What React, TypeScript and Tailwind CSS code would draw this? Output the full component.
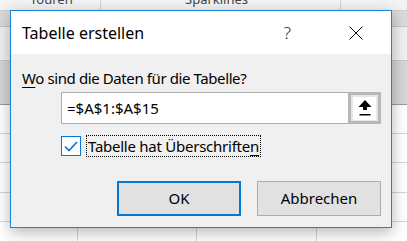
import React from "react";

function UploadArrow() {
  return (
    <svg width="14" height="17" viewBox="0 0 14 17" className="block">
      <path d="M7 0 L13.5 7 L9 7 L9 10 L5 10 L5 7 L0.5 7 Z" fill="#000" />
      <rect x="1.5" y="14" width="11" height="1.5" fill="#000" />
    </svg>
  );
}

function Sheet() {
  return (
    <div className="absolute inset-0 flex flex-col bg-white">
      <div className="relative h-[11px] bg-[#f3f3f3] border-b border-[#d0d0d0] text-[13px] leading-none text-[#444]">
        <span className="absolute left-[30px] top-[-7px]">Touren</span>
        <span className="absolute left-[185px] top-[-7px]">Sparklines</span>
        <div className="absolute left-[100px] top-0 h-full w-px bg-[#d4d4d4]" />
        <div className="absolute left-[340px] top-0 h-full w-px bg-[#d4d4d4]" />
      </div>
      <div className="h-[16px] bg-[#dadada] border-b border-[#c6c6c6]" />
      <div className="h-[34px] bg-[#f0f0f0] border-b border-[#c6c6c6]" />
      <div className="h-[44px] bg-[#d6d6d6] border-b border-[#9a9a9a]" />
      <div className="relative flex-1 bg-white">
        <div className="h-[29px] border-b border-[#d4d4d4]" />
        <div className="h-[29px] border-b border-[#d4d4d4]" />
        <div className="h-[30px] border-b border-[#d4d4d4]" />
        <div className="h-[29px] border-b border-[#d4d4d4]" />
        <div className="absolute left-[77px] top-0 h-full w-px bg-[#d4d4d4]" />
        <div className="absolute left-[196px] top-0 h-full w-px bg-[#d4d4d4]" />
        <div className="absolute left-[316px] top-0 h-full w-px bg-[#d4d4d4]" />
      </div>
    </div>
  );
}

export default function App() {
  return (
    <div
      className="relative w-[407px] h-[241px] overflow-hidden text-black"
      style={{ fontFamily: '"Noto Sans", "Open Sans", sans-serif' }}
    >
      <Sheet />
      <div className="absolute left-[10px] top-[10px] w-[382px] h-[218px] border border-[#1883d7] bg-[#f0f0f0] shadow-[0_4px_14px_rgba(0,0,0,0.3)] flex flex-col">
        <div className="h-[43px] bg-white flex items-center pl-[11px] text-[16px]">
          <span className="mt-[1px]">Tabelle erstellen</span>
          <span className="ml-auto mr-[58px] text-[17px] text-[#222] font-light">?</span>
          <svg width="14" height="14" viewBox="0 0 14 14" className="mr-[28px]">
            <path d="M0.5 0.5 L13.5 13.5 M13.5 0.5 L0.5 13.5" stroke="#111" strokeWidth="1" />
          </svg>
        </div>
        <div className="flex flex-col pl-[11px] pr-[10px] pt-[14px] text-[15px]">
          <div className="leading-[20px] tracking-[-0.4px]">
            <span className="underline underline-offset-[3px]">W</span>o sind die Daten für die Tabelle?
          </div>
          <div className="ml-[39px] mt-[4px] h-[32px] flex border border-[#adadad] bg-white">
            <div className="flex-1 flex items-center pl-[5px] text-[15px]">=$A$1:$A$15</div>
            <div className="w-[33px] border-[3px] border-[#b7b7b7] bg-[#e6e6e6] flex items-center justify-center -my-px -mr-px">
              <div className="w-[23px] h-[23px] bg-white flex items-center justify-center">
                <UploadArrow />
              </div>
            </div>
          </div>
          <div className="ml-[39px] mt-[11px] flex items-center">
            <div className="w-[20px] h-[20px] border border-[#0078d7] bg-white flex items-center justify-center">
              <svg width="14" height="11" viewBox="0 0 14 11">
                <path d="M1 5.5 L5 9.5 L13 1" fill="none" stroke="#0078d7" strokeWidth="1.6" />
              </svg>
            </div>
            <div className="ml-[5px] h-[22px] px-[1px] flex items-center border border-dotted border-black leading-none tracking-[-0.25px]">
              Tabelle hat Überschrifte<span className="underline underline-offset-[3px]">n</span>
            </div>
          </div>
          <div className="mt-[24px] flex justify-end gap-[16px]">
            <button className="w-[124px] h-[35px] bg-[#e1e1e1] border-2 border-[#0078d7] text-[15px] flex items-center justify-center">
              OK
            </button>
            <button className="w-[124px] h-[35px] bg-[#e1e1e1] border border-[#adadad] text-[15px] flex items-center justify-center">
              Abbrechen
            </button>
          </div>
        </div>
      </div>
    </div>
  );
}
